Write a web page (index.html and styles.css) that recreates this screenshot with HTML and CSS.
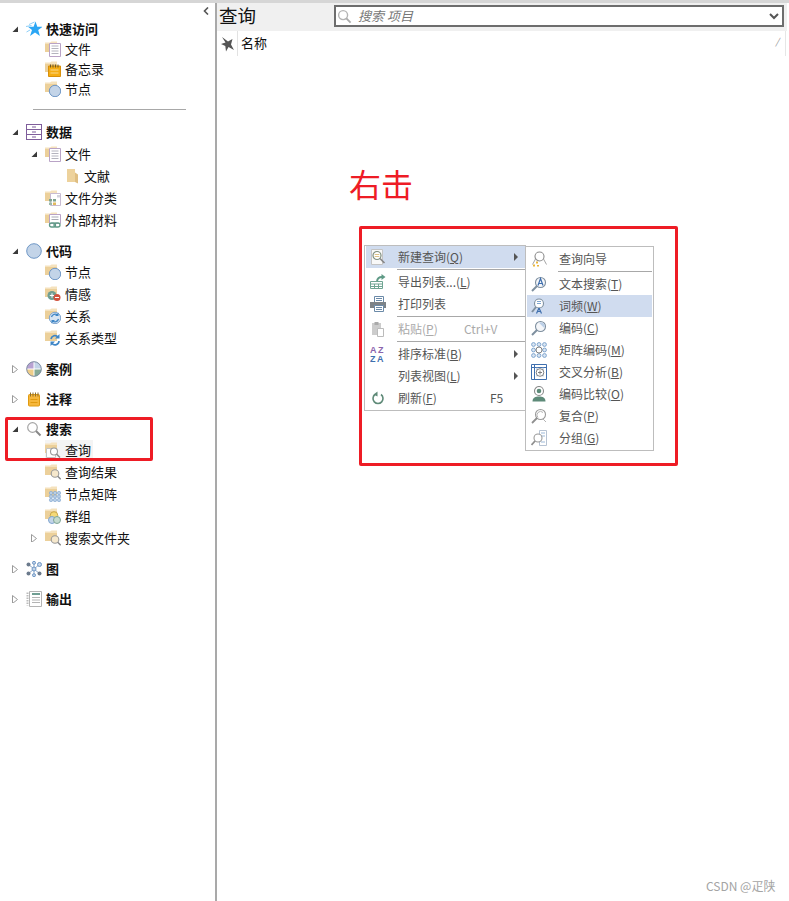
FILE: index.html
```html
<!DOCTYPE html>
<html lang="zh-CN">
<head>
<meta charset="utf-8">
<title>查询</title>
<link rel="stylesheet" href="styles.css">
</head>
<body>
<svg class="defs" width="0" height="0" aria-hidden="true">
  <defs>
    <symbol id="open" viewBox="0 0 8 8"><path d="M7 1.500V7H1.500z" fill="#3a3a3a"/></symbol>
    <symbol id="shut" viewBox="0 0 8 8"><path d="M1.500 0.500L6.500 4.500L1.500 8.500z" fill="#fff" stroke="#9a9a9a"/></symbol>
    <symbol id="folder" viewBox="0 0 16 16"><path d="M0 3V1.500h5L6.500 0.500H12v10H0z" fill="#f5e2bd"/><path d="M0 3h12v8H0z" fill="#ecd09a"/></symbol>
    <symbol id="star" viewBox="0 0 16 16"><path d="M9.500 .5L11.300 5.800H16.500L12.200 9l1.700 6L9 11.500 4 15l2-6L2 5.800h5.600z" fill="#2ba6f4"/><path d="M8.500 1L3 3.500M5.500 4.500L0 5.500M4 9L.5 11" stroke="#8dcff8" stroke-width="1" fill="none"/></symbol>
    <symbol id="page" viewBox="0 0 16 16"><use href="#folder"/><path d="M4.500 2.500h11v13h-11z" fill="#fff" stroke="#b9a3c6"/><path d="M6.500 5h7M6.500 7.500h7M6.500 10h7M6.500 12.500h7" stroke="#b4b4be"/></symbol>
    <symbol id="fmemo" viewBox="0 0 16 16"><use href="#folder"/><path d="M3.500 5h12v10.500h-12z" fill="#f5ad14" stroke="#d8900c"/><path d="M5.500 3.500v3M8 3.500v3M10.500 3.500v3M13 3.500v3" stroke="#6b5a2a"/><path d="M5.500 9h8M5.500 12h8" stroke="#fbd98a"/></symbol>
    <symbol id="fnode" viewBox="0 0 16 16"><use href="#folder"/><circle cx="10" cy="10" r="5.700" fill="#c3d4e8" stroke="#6f97c6"/></symbol>
    <symbol id="drawer" viewBox="0 0 16 16"><rect x="0.500" y="0.500" width="15" height="15" fill="#fff" stroke="#7f5d9b"/><path d="M1 5.500h14M1 10.500h14" stroke="#7f5d9b"/><path d="M6 3h4M6 8h4M6 13h4" stroke="#7f5d9b"/></symbol>
    <symbol id="doc" viewBox="0 0 16 16"><path d="M3 1h8v13H3z" fill="#edd29c"/><path d="M11 4.500l3 2V15.500L11 14z" fill="#dfbe82"/></symbol>
    <symbol id="fclass" viewBox="0 0 16 16"><use href="#folder"/><path d="M5.500 3.500h10v12h-10z" fill="#fff" stroke="#c8bcd2"/><path d="M4 9h3v2.500H4zM8 9h3v2.500H8z" fill="#7fa38f"/><path d="M4 12.500h3V15H4z" fill="#9db8a8"/><path d="M8 12.500h3V15H8z" fill="#e2b95d"/><path d="M12 5h3v2.500h-3z" fill="#d3d3dc"/></symbol>
    <symbol id="fext" viewBox="0 0 16 16"><use href="#folder"/><path d="M4.500 2.500h11v9h-11z" fill="#fff" stroke="#b9a3c6"/><path d="M6.500 5h7M6.500 7.500h7" stroke="#a9a9b4"/><rect x="4.500" y="11" width="6" height="4" rx="2" fill="none" stroke="#5f9a86" stroke-width="1.300"/><rect x="9" y="11" width="6" height="4" rx="2" fill="none" stroke="#5f9a86" stroke-width="1.300"/></symbol>
    <symbol id="circle" viewBox="0 0 16 16"><circle cx="8" cy="8" r="7.300" fill="#c3d4e8" stroke="#6f97c6"/></symbol>
    <symbol id="fsent" viewBox="0 0 16 16"><use href="#folder"/><circle cx="7" cy="9.500" r="4.500" fill="#6f9e92"/><path d="M4.800 9.500h4.400M7 7.300v4.400" stroke="#fff"/><circle cx="12" cy="11.500" r="3.500" fill="#d0513c"/><path d="M10 11.500h4" stroke="#fff"/></symbol>
    <symbol id="frel" viewBox="0 0 16 16"><use href="#folder"/><circle cx="10" cy="10" r="5.700" fill="#d7e4f2" stroke="#7fa5cf"/><path d="M6.500 9a3.800 3.800 0 0 1 6-2M13.500 11a3.800 3.800 0 0 1-6 2" fill="none" stroke="#3f86c6" stroke-width="1.300"/><path d="M13.500 4.500v3.500h-3.500zM6.500 15.500V12H10z" fill="#3f86c6"/></symbol>
    <symbol id="freltype" viewBox="0 0 16 16"><use href="#folder"/><path d="M6 9a4 4 0 0 1 7-2M14 11a4 4 0 0 1-7 2.500" fill="none" stroke="#3f86c6" stroke-width="1.700"/><path d="M14.500 4v4.500H10zM5.500 16v-4.500H10z" fill="#3f86c6"/></symbol>
    <symbol id="case" viewBox="0 0 16 16"><path d="M8 8V.5A7.500 7.500 0 0 0 .5 8z" fill="#b8a2d2"/><path d="M8 8V.5A7.500 7.500 0 0 1 15.500 8z" fill="#c3d4e8"/><path d="M8 8H.5A7.500 7.500 0 0 0 8 15.500z" fill="#efce8a"/><path d="M8 8v7.500A7.500 7.500 0 0 0 15.500 8z" fill="#86aa96"/><path d="M8 .5v15M.5 8h15" stroke="#fff"/><circle cx="8" cy="8" r="7.300" fill="none" stroke="#7f8ea3"/></symbol>
    <symbol id="memo" viewBox="0 0 16 16"><rect x="2.500" y="3.500" width="11" height="11.500" rx="1" fill="#f6b73c" stroke="#e09a10"/><path d="M4.500 1.500v4M7 1.500v4M9.500 1.500v4M12 1.500v4" stroke="#8a6d2c"/><path d="M4.500 8.500h7M4.500 11.500h7" stroke="#e09a10"/></symbol>
    <symbol id="lens" viewBox="0 0 16 16"><circle cx="6.500" cy="6.500" r="4.800" fill="#fff" stroke="#a5a5a5" stroke-width="1.200"/><path d="M10 10l4.500 4.500" stroke="#888" stroke-width="2"/></symbol>
    <symbol id="fquery" viewBox="0 0 16 16"><use href="#folder"/><path d="M1.500 6.500h9v9h-9z" fill="#fff" stroke="#c4c4c4"/><circle cx="9" cy="9.500" r="3.500" fill="#fff" stroke="#9a9a9a" stroke-width="1.100"/><path d="M11.500 12l3.500 3.500" stroke="#8a8a8a" stroke-width="1.500"/></symbol>
    <symbol id="fresult" viewBox="0 0 16 16"><use href="#folder"/><circle cx="10" cy="9.500" r="3.800" fill="#f6e8cc" stroke="#9a9a9a" stroke-width="1.100"/><path d="M12.700 12.200l3 3" stroke="#8a8a8a" stroke-width="1.500"/></symbol>
    <symbol id="fmatrix" viewBox="0 0 16 16"><use href="#folder"/><g fill="#b7cde6" stroke="#7fa5cf" stroke-width=".6"><circle cx="6" cy="7" r="1.700"/><circle cx="10" cy="7" r="1.700"/><circle cx="14" cy="7" r="1.700"/><circle cx="6" cy="10.500" r="1.700"/><circle cx="10" cy="10.500" r="1.700"/><circle cx="14" cy="10.500" r="1.700"/><circle cx="6" cy="14" r="1.700"/><circle cx="10" cy="14" r="1.700"/><circle cx="14" cy="14" r="1.700"/></g></symbol>
    <symbol id="fgroup" viewBox="0 0 16 16"><use href="#folder"/><circle cx="9" cy="7.500" r="3.800" fill="#f5d978" stroke="#caa84a"/><circle cx="7" cy="12" r="3.500" fill="#c3d4e8" stroke="#7fa5cf"/><circle cx="12" cy="12" r="3.500" fill="#c5dbcf" stroke="#7fa596"/></symbol>
    <symbol id="graph" viewBox="0 0 16 16"><path d="M8 8L2 3M8 8l6-5M8 8l-6 5M8 8l6 5M8 8V1M8 8v7" stroke="#8aa6c6"/><circle cx="8" cy="8" r="2" fill="#c3d4e8" stroke="#6f97c6"/><circle cx="2.500" cy="3.500" r="2" fill="#6b7a8c"/><circle cx="13.500" cy="3.500" r="2" fill="#c3d4e8" stroke="#6f97c6"/><circle cx="2.500" cy="12.500" r="2" fill="#6b7a8c"/><circle cx="13.500" cy="12.500" r="2" fill="#6b7a8c"/><circle cx="8" cy="1.800" r="1.500" fill="#c3d4e8" stroke="#6f97c6"/><circle cx="8" cy="14.200" r="1.500" fill="#c3d4e8" stroke="#6f97c6"/></symbol>
    <symbol id="output" viewBox="0 0 16 16"><path d="M3.500 .5h12v15h-12z" fill="#fff" stroke="#b4b4b4"/><path d="M1.500 1.500v13" stroke="#bbb" stroke-width="2" stroke-dasharray="1.500 1"/><path d="M6 3h8" stroke="#6f9e92" stroke-width="2"/><path d="M6 6.500h8M6 9h8M6 11.500h8" stroke="#b4b4b4"/></symbol>
    <symbol id="pin" viewBox="0 0 14 16"><path d="M1 1l6 4.500L11.500 3l-1.500 5.500L13 14l-5.500-3L5 15.500 4.300 10 0 8l4.500-1.500z" fill="#555"/></symbol>
    <symbol id="mquery" viewBox="0 0 16 16"><path d="M1.500 .5h11v15h-11z" fill="#f8f8f8" stroke="#c4c4c4"/><circle cx="7" cy="6.500" r="4" fill="#fff" stroke="#7e8e7e" stroke-width="1.200"/><path d="M4.700 5.500h4.600M4.700 7.500h4.600" stroke="#dfc48a"/><path d="M10 9.500l4.500 4.500" stroke="#888" stroke-width="1.700"/></symbol>
    <symbol id="mexport" viewBox="0 0 16 16"><path d="M.5 7.500h12v7H.5z" fill="#fff" stroke="#6fa592"/><path d="M.5 10h12M.5 12.500h12M4.500 10v4.500M8.500 10v4.500" stroke="#6fa592"/><path d="M7 7a5 5 0 0 1 5-4" fill="none" stroke="#5f9a86" stroke-width="2"/><path d="M11.500 0l4 3-4 3z" fill="#5f9a86"/></symbol>
    <symbol id="mprint" viewBox="0 0 16 16"><path d="M4.500 .5h9v6h-9z" fill="#fff" stroke="#6b8aa8"/><path d="M6 2.500h6M6 4.500h6" stroke="#6b8aa8"/><path d="M0 6h16v6H0z" fill="#7d8388"/><path d="M4.500 9.500h9v6h-9z" fill="#fff" stroke="#6b8aa8"/><path d="M6 11.500h6M6 13.500h6" stroke="#6b8aa8"/></symbol>
    <symbol id="mpaste" viewBox="0 0 16 16"><path d="M2 2h9v12H2z" fill="#ccc"/><path d="M4.500 1h4v3h-4z" fill="#aaa"/><path d="M7.500 7.500h6v8h-6z" fill="#fff" stroke="#bbb"/></symbol>
    <symbol id="mrefresh" viewBox="0 0 16 16"><path d="M5 4.500a5 5 0 1 0 6 0" fill="none" stroke="#5f8a78" stroke-width="1.600"/><path d="M7.500 1.500v5L3.500 4.500z" fill="#5f8a78"/></symbol>
    <symbol id="wizard" viewBox="0 0 16 16"><circle cx="8.500" cy="5.500" r="4.500" fill="#fff" stroke="#8c8c8c" stroke-width="1.100"/><path d="M4.500 8l-3 5.500M12.500 8l3 5.500" stroke="#a5a5a5"/><path d="M5 10.500h2v2H5zM2 13.500h2v2H2zM6 14h2v1.500H6z" fill="#e9b53a"/></symbol>
    <symbol id="lensbase" viewBox="0 0 16 16"><circle cx="9.500" cy="6.500" r="5" fill="#f4f6f9" stroke="#7e8f9f" stroke-width="1.100"/><path d="M6 10l-5 5" stroke="#7e8f9f" stroke-width="2"/></symbol>
    <symbol id="mtext" viewBox="0 0 16 16"><use href="#lensbase"/><path d="M7 9.500L9.500 2.500L12 9.500M8 7.500h3" fill="none" stroke="#3f6fae" stroke-width="1.200"/></symbol>
    <symbol id="mfreq" viewBox="0 0 16 16"><circle cx="8" cy="5.500" r="4.500" fill="#fff" stroke="#7e8f9f" stroke-width="1.100"/><path d="M5 9l-4 5" stroke="#7e8f9f" stroke-width="2"/><path d="M6 5.500h4M6 3.500h4" stroke="#7fa5cf"/><path d="M8 10l-2.500 5.500M8 10l2.500 5.500M6.500 13.500h3" stroke="#3f6fae" stroke-width="1.200" fill="none"/></symbol>
    <symbol id="mcode" viewBox="0 0 16 16"><use href="#lensbase"/><path d="M8 2.800a3.800 3.800 0 0 1 5.200 5.200z" fill="#bcd0e8"/></symbol>
    <symbol id="mmatrix" viewBox="0 0 16 16"><g fill="#dbe6f2" stroke="#7fa5cf"><circle cx="2.500" cy="2.500" r="1.900"/><circle cx="8" cy="2.500" r="1.900"/><circle cx="13.500" cy="2.500" r="1.900"/><circle cx="2.500" cy="8" r="1.900"/><circle cx="13.500" cy="8" r="1.900"/><circle cx="2.500" cy="13.500" r="1.900"/><circle cx="8" cy="13.500" r="1.900"/><circle cx="13.500" cy="13.500" r="1.900"/></g><circle cx="8" cy="8" r="3" fill="#fff" stroke="#808080"/></symbol>
    <symbol id="mcross" viewBox="0 0 16 16"><path d="M.5 .5h15v15H.5z" fill="#fff" stroke="#3f6fae"/><path d="M3.500 .5v15M.5 3.500h15" stroke="#3f6fae"/><path d="M6 3.500v9M12 3.500v9" stroke="#9db9d9"/><circle cx="9" cy="8.500" r="3.800" fill="#fff" stroke="#808080"/><path d="M9 6.500v4M7 8.500h4" stroke="#808080"/></symbol>
    <symbol id="mcompare" viewBox="0 0 16 16"><circle cx="8" cy="5" r="4.500" fill="#fff" stroke="#8a8a8a" stroke-width="1.100"/><circle cx="8" cy="5" r="2.300" fill="#5d8a78"/><path d="M1.500 15.500c0-4 3-5 6.500-5s6.500 1 6.500 5z" fill="#5d8a78"/></symbol>
    <symbol id="mcompound" viewBox="0 0 16 16"><circle cx="9.500" cy="6.500" r="5" fill="#fff" stroke="#9a9a9a" stroke-width="1.100"/><path d="M6 10l-5 5" stroke="#8f8f8f" stroke-width="1.800"/><path d="M7 9.500a3.500 3.500 0 0 1 5-5" fill="none" stroke="#b4b4b4"/><path d="M12 11l3 3" stroke="#b4b4b4"/></symbol>
    <symbol id="mgroup" viewBox="0 0 16 16"><path d="M8.500 .5h7v15h-7z" fill="#fff" stroke="#b7c3d3"/><path d="M10 3h4M10 6h4M10 12h4" stroke="#9db9d9"/><circle cx="7" cy="8" r="4" fill="#fff" stroke="#9a9a9a" stroke-width="1.100"/><path d="M4 11l-3.500 4" stroke="#8f8f8f" stroke-width="1.800"/></symbol>
  </defs>
</svg>

<div class="app">
  <aside class="side">
    <button class="collapse" type="button" aria-label="收起">
      <svg width="6" height="8" viewBox="0 0 6 8"><path d="M5 .5L1.500 4L5 7.500" fill="none" stroke="#555" stroke-width="1.600"/></svg>
    </button>

    <section class="group">
      <div class="row head"><svg class="caret"><use href="#open"/></svg><span class="node"><svg class="ico"><use href="#star"/></svg>快速访问</span></div>
      <div class="row lv1 tight"><span class="caret-slot"></span><span class="node"><svg class="ico"><use href="#page"/></svg>文件</span></div>
      <div class="row lv1 tight"><span class="caret-slot"></span><span class="node"><svg class="ico"><use href="#fmemo"/></svg>备忘录</span></div>
      <div class="row lv1 tight"><span class="caret-slot"></span><span class="node"><svg class="ico"><use href="#fnode"/></svg>节点</span></div>
    </section>
    <hr class="rule">

    <section class="group">
      <div class="row head spaced"><svg class="caret"><use href="#open"/></svg><span class="node"><svg class="ico"><use href="#drawer"/></svg>数据</span></div>
      <div class="row lv1"><svg class="caret"><use href="#open"/></svg><span class="node"><svg class="ico"><use href="#page"/></svg>文件</span></div>
      <div class="row lv2"><span class="caret-slot"></span><span class="node"><svg class="ico"><use href="#doc"/></svg>文献</span></div>
      <div class="row lv1"><span class="caret-slot"></span><span class="node"><svg class="ico"><use href="#fclass"/></svg>文件分类</span></div>
      <div class="row lv1"><span class="caret-slot"></span><span class="node"><svg class="ico"><use href="#fext"/></svg>外部材料</span></div>
    </section>

    <section class="group">
      <div class="row head"><svg class="caret"><use href="#open"/></svg><span class="node"><svg class="ico"><use href="#circle"/></svg>代码</span></div>
      <div class="row lv1"><span class="caret-slot"></span><span class="node"><svg class="ico"><use href="#fnode"/></svg>节点</span></div>
      <div class="row lv1"><span class="caret-slot"></span><span class="node"><svg class="ico"><use href="#fsent"/></svg>情感</span></div>
      <div class="row lv1"><span class="caret-slot"></span><span class="node"><svg class="ico"><use href="#frel"/></svg>关系</span></div>
      <div class="row lv1"><span class="caret-slot"></span><span class="node"><svg class="ico"><use href="#freltype"/></svg>关系类型</span></div>
    </section>

    <section class="group">
      <div class="row head"><svg class="caret"><use href="#shut"/></svg><span class="node"><svg class="ico"><use href="#case"/></svg>案例</span></div>
    </section>

    <section class="group">
      <div class="row head"><svg class="caret"><use href="#shut"/></svg><span class="node"><svg class="ico"><use href="#memo"/></svg>注释</span></div>
    </section>

    <section class="group">
      <div class="row head"><svg class="caret"><use href="#open"/></svg><span class="node"><svg class="ico"><use href="#lens"/></svg>搜索</span></div>
      <div class="row lv1"><span class="caret-slot"></span><span class="node selected"><svg class="ico"><use href="#fquery"/></svg>查询</span></div>
      <div class="row lv1"><span class="caret-slot"></span><span class="node"><svg class="ico"><use href="#fresult"/></svg>查询结果</span></div>
      <div class="row lv1"><span class="caret-slot"></span><span class="node"><svg class="ico"><use href="#fmatrix"/></svg>节点矩阵</span></div>
      <div class="row lv1"><span class="caret-slot"></span><span class="node"><svg class="ico"><use href="#fgroup"/></svg>群组</span></div>
      <div class="row lv1"><svg class="caret"><use href="#shut"/></svg><span class="node"><svg class="ico"><use href="#fresult"/></svg>搜索文件夹</span></div>
    </section>

    <section class="group">
      <div class="row head"><svg class="caret"><use href="#shut"/></svg><span class="node"><svg class="ico"><use href="#graph"/></svg>图</span></div>
    </section>

    <section class="group">
      <div class="row head"><svg class="caret"><use href="#shut"/></svg><span class="node"><svg class="ico"><use href="#output"/></svg>输出</span></div>
    </section>
  </aside>

  <main class="content">
    <header class="titlebar">
      <h1 class="title">查询</h1>
      <div class="search">
        <svg class="search-lens" viewBox="0 0 16 16"><circle cx="6.500" cy="6.500" r="4.800" fill="#fff" stroke="#b5b5b5" stroke-width="1.500"/><path d="M10 10l4.500 4.500" stroke="#aaa" stroke-width="2"/></svg>
        <span class="search-text">搜索 项目</span>
        <svg class="search-drop" viewBox="0 0 10 7"><path d="M1 1l4 4 4-4" fill="none" stroke="#555" stroke-width="2"/></svg>
      </div>
    </header>
    <div class="columns">
      <div class="col-pin"><svg class="pin"><use href="#pin"/></svg></div>
      <div class="col-name">名称<span class="sort">/</span></div>
    </div>
  </main>

  <div class="annot-label">右击</div>
  <div class="annot-box annot-search"></div>
  <div class="annot-box annot-menu"></div>

  <ul class="menu menu-main">
    <li class="mi active"><svg class="mi-ico"><use href="#mquery"/></svg><span class="mi-text">新建查询(<u>Q</u>)</span><i class="arrow"></i></li>
    <li class="msep"></li>
    <li class="mi"><svg class="mi-ico"><use href="#mexport"/></svg><span class="mi-text">导出列表...(<u>L</u>)</span></li>
    <li class="mi"><svg class="mi-ico"><use href="#mprint"/></svg><span class="mi-text">打印列表</span></li>
    <li class="msep"></li>
    <li class="mi off"><svg class="mi-ico"><use href="#mpaste"/></svg><span class="mi-text">粘贴(<u>P</u>)</span><span class="key key-wide">Ctrl+V</span></li>
    <li class="msep"></li>
    <li class="mi"><span class="az mi-ico"><b>AZ</b><b class="z">ZA</b></span><span class="mi-text">排序标准(<u>B</u>)</span><i class="arrow"></i></li>
    <li class="mi"><span class="mi-ico"></span><span class="mi-text">列表视图(<u>L</u>)</span><i class="arrow"></i></li>
    <li class="mi"><svg class="mi-ico"><use href="#mrefresh"/></svg><span class="mi-text">刷新(<u>F</u>)</span><span class="key">F5</span></li>
  </ul>

  <ul class="menu menu-sub">
    <li class="mi"><svg class="mi-ico"><use href="#wizard"/></svg><span class="mi-text">查询向导</span></li>
    <li class="msep"></li>
    <li class="mi"><svg class="mi-ico"><use href="#mtext"/></svg><span class="mi-text">文本搜索(<u>T</u>)</span></li>
    <li class="mi active"><svg class="mi-ico"><use href="#mfreq"/></svg><span class="mi-text">词频(<u>W</u>)</span></li>
    <li class="mi"><svg class="mi-ico"><use href="#mcode"/></svg><span class="mi-text">编码(<u>C</u>)</span></li>
    <li class="mi"><svg class="mi-ico"><use href="#mmatrix"/></svg><span class="mi-text">矩阵编码(<u>M</u>)</span></li>
    <li class="mi"><svg class="mi-ico"><use href="#mcross"/></svg><span class="mi-text">交叉分析(<u>B</u>)</span></li>
    <li class="mi"><svg class="mi-ico"><use href="#mcompare"/></svg><span class="mi-text">编码比较(<u>O</u>)</span></li>
    <li class="mi"><svg class="mi-ico"><use href="#mcompound"/></svg><span class="mi-text">复合(<u>P</u>)</span></li>
    <li class="mi"><svg class="mi-ico"><use href="#mgroup"/></svg><span class="mi-text">分组(<u>G</u>)</span></li>
  </ul>

  <div class="watermark">CSDN @疋陕</div>
</div>
</body>
</html>
```

FILE: styles.css
```css
* { box-sizing: border-box; }
html, body { margin: 0; padding: 0; height: 100%; background: #fff; overflow: hidden; }
body { font-family: "Noto Sans CJK SC", "Noto Sans", sans-serif; color: #111; font-size: 13px; }
.defs { position: absolute; }

.app { position: relative; display: flex; width: 789px; height: 901px; border-top: 3px solid #d6d6d6; overflow: hidden; }

/* Sidebar tree */
.side { position: relative; width: 217px; flex: none; padding-top: 16px; border-right: 2px solid #a9a9a9; }
.collapse { position: absolute; top: 4px; left: 203px; width: 6px; height: 8px; padding: 0; border: 0; background: none; display: block; }
.collapse svg { display: block; }

.group { margin-bottom: 10px; }
.row { display: flex; align-items: center; height: 22px; padding-left: 29px; white-space: nowrap; line-height: 20px; }
.row.head { height: 20px; padding-left: 10px; font-weight: 700; }
.row.spaced { margin-bottom: 1px; }
.row.tight { height: 20px; }
.row.lv2 { padding-left: 48px; }
.caret, .caret-slot { width: 8px; height: 8px; margin-right: 7px; margin-left: 1px; flex: none; display: block; }
.node { display: flex; align-items: center; gap: 4px; height: 20px; }
.node.selected { background: #f4f4f4; padding-right: 2px; }
.ico { width: 16px; height: 16px; flex: none; display: block; }

.rule { height: 1px; border: 0; margin: 0 29px 12px 33px; background: #a8a8a8; }

/* Main panel */
.content { flex: 1; min-width: 0; }
.titlebar { display: flex; align-items: center; height: 28px; margin-right: 2px; padding: 0 3px 0 2px; background: #f0f0f0; }
.title { margin: 0 0 4px; width: 115px; font-size: 18.500px; font-weight: 400; line-height: 24px; flex: none; color: #111; }
.search { display: flex; align-items: center; width: 450px; height: 22px; padding: 0 1px; background: #fff; border: 2px solid #6d6d6d; margin-bottom: 2px; }
.search-lens { width: 15px; height: 15px; flex: none; }
.search-text { margin-left: 6px; flex: 1; font-style: italic; font-size: 13px; color: #777; line-height: 18px; }
.search-drop { width: 10px; height: 7px; flex: none; margin-right: 2px; }

.columns { display: flex; height: 25px; font-size: 13px; }
.col-pin { width: 21px; border-right: 1px solid #e2e2e2; display: flex; align-items: center; padding-left: 4px; }
.pin { width: 14px; height: 16px; display: block; }
.col-name { position: relative; width: 548px; padding-left: 3px; line-height: 24px; border-right: 1px solid #e6e6e6; }
.sort { position: absolute; right: 6px; top: -1px; font-size: 9px; color: #888; font-style: italic; }

/* Annotations */
.annot-label { position: absolute; left: 349px; top: 159px; font-size: 32px; line-height: 42px; color: #ee1c25; }
.annot-box { position: absolute; border: 3px solid #ee1c25; border-radius: 2px; }
.annot-search { left: 5px; top: 414px; width: 148px; height: 44px; }
.annot-menu { left: 359px; top: 223px; width: 319px; height: 240px; }

/* Context menus */
.menu { position: absolute; margin: 0; list-style: none; background: #fff; border: 1px solid #bdbdbd; padding: 0 1px; font-size: 12px; color: #555; }
.menu-main { left: 364px; top: 242px; width: 162px; height: 166px; border-right: 0; }
.menu-sub { left: 525px; top: 243px; width: 129px; height: 205px; padding: 1px; }
.mi { display: flex; align-items: center; height: 22px; padding-left: 4px; line-height: 18px; white-space: nowrap; }
.mi.active { background: #d0dcef; }
.mi.off { color: #aaa; }
.mi-ico { width: 16px; height: 16px; flex: none; display: block; margin-right: 12px; }
.mi-text { flex: none; width: 66px; }
.menu-main .mi-text { width: 92px; }
.key { color: #555; }
.mi.off .key { color: #aaa; }
.key-wide { margin-left: -26px; }
.arrow { width: 0; height: 0; margin-left: 24px; border-left: 4px solid #555; border-top: 4px solid transparent; border-bottom: 4px solid transparent; }
.msep { height: 3px; padding-top: 1px; }
.msep::after { content: ""; display: block; height: 1px; background: #a8a8a8; }
.menu-main .msep { margin-left: 31px; margin-right: -1px; }
.menu-sub .msep { margin-left: 31px; }

.az { font-family: "Liberation Sans", sans-serif; font-size: 9px; line-height: 9px; letter-spacing: 1.500px; }
.az b { display: block; font-weight: 700; color: #8a63ac; height: 9px; }
.az b.z { color: #3f6fae; }

.watermark { position: absolute; left: 706px; top: 875px; font-size: 12px; line-height: 16px; color: #a4a4a4; }
```
